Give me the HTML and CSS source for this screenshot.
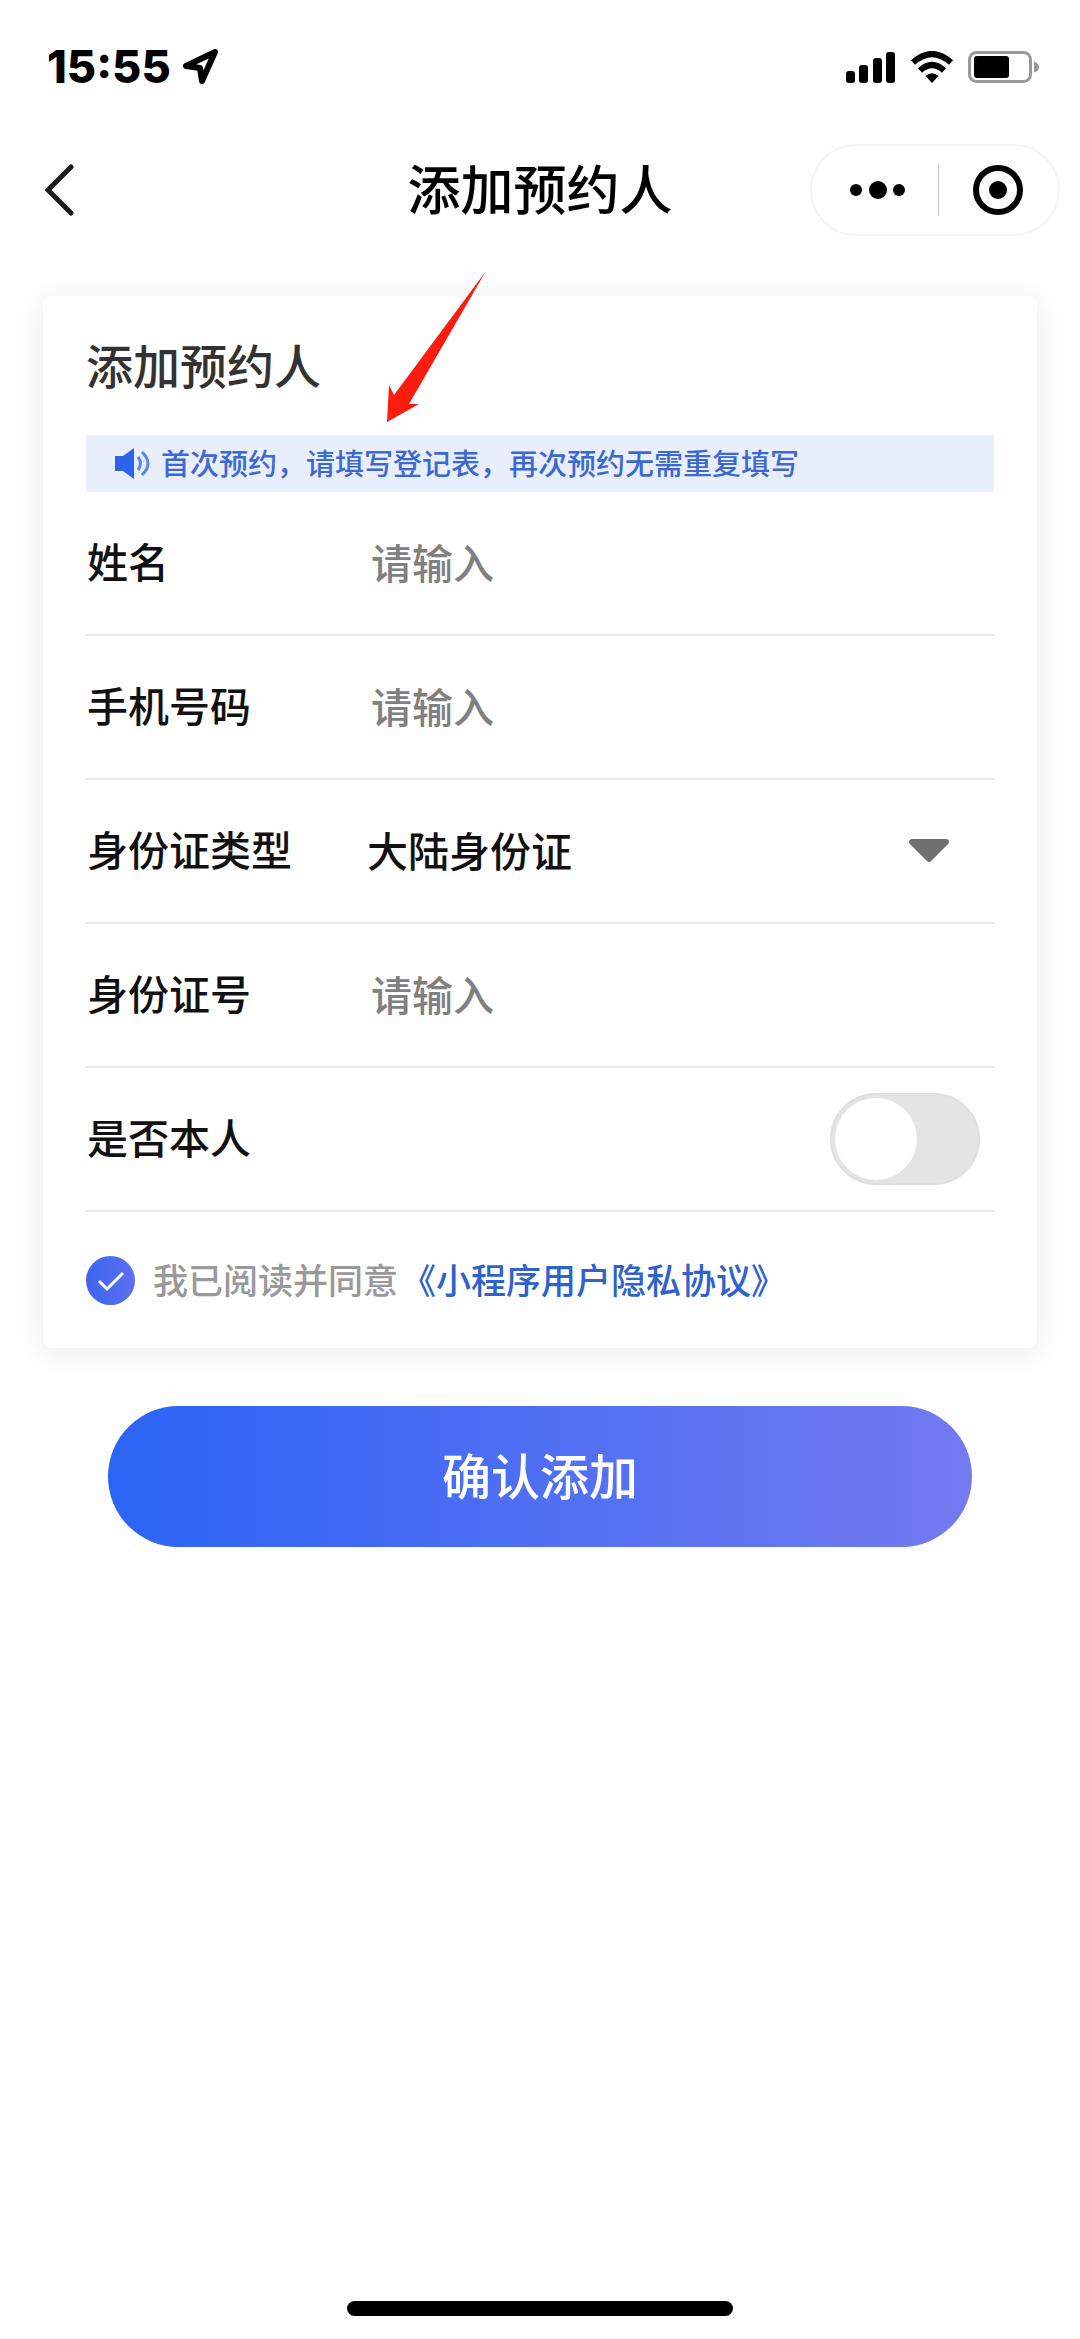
FILE: index.html
```html
<!DOCTYPE html>
<html lang="zh-CN">
<head>
  <meta charset="UTF-8">
  <meta name="viewport" content="width=device-width, initial-scale=1">
  <title>添加预约人</title>
  <link rel="stylesheet" href="styles.css">
</head>
<body>
  <div class="status-bar">
    <div class="status-left">
      <span class="time">15:55</span>
      <svg class="location" width="36" height="36" viewBox="0 0 36 36">
        <path d="M32 3 L3 17 L17 19 L19 32 Z" fill="none" stroke="#000" stroke-width="6" stroke-linejoin="round"/>
      </svg>
    </div>
    <div class="status-right">
      <svg width="50" height="32" viewBox="0 0 50 32">
        <rect x="0" y="20" width="9" height="12" rx="3"/>
        <rect x="13" y="14" width="9" height="18" rx="3"/>
        <rect x="27" y="7" width="9" height="25" rx="3"/>
        <rect x="40" y="1" width="9" height="31" rx="3"/>
      </svg>
      <svg width="44" height="32" viewBox="0 0 44 32">
        <path d="M3 11.5 Q22 -5.5 41 11.5" fill="none" stroke="#000" stroke-width="6"/>
        <path d="M10 19.5 Q22 8.5 34 19.5" fill="none" stroke="#000" stroke-width="6"/>
        <path d="M15.5 25 Q22 19.5 28.5 25 L22 32 Z"/>
      </svg>
      <svg width="72" height="32" viewBox="0 0 72 32">
        <rect x="1.5" y="1.5" width="61" height="29" rx="7" fill="none" stroke="#999" stroke-width="3"/>
        <rect x="6" y="5" width="35" height="22" rx="3"/>
        <path d="M66 10.500 Q71 12 71 16 T66 21.500 Z" fill="#999"/>
      </svg>
    </div>
  </div>

  <header class="nav-bar">
    <button type="button" class="back" aria-label="返回">
      <svg width="30" height="52" viewBox="0 0 30 52">
        <path d="M26 3 L3 26 L26 49" fill="none" stroke="#1a1a1a" stroke-width="5" stroke-linecap="round"/>
      </svg>
    </button>
    <h1>添加预约人</h1>
    <div class="capsule">
      <button type="button" class="more" aria-label="更多">
        <svg width="56" height="52" viewBox="0 0 56 52">
          <circle cx="6" cy="26" r="6"/>
          <circle cx="28" cy="26" r="9"/>
          <circle cx="49" cy="26" r="6"/>
        </svg>
      </button>
      <button type="button" aria-label="关闭">
        <svg width="52" height="52" viewBox="0 0 52 52">
          <circle cx="26" cy="26" r="22" fill="none" stroke="#000" stroke-width="6"/>
          <circle cx="26" cy="26" r="9"/>
        </svg>
      </button>
    </div>
  </header>

  <form class="booking-form">
    <div class="card">
      <h2>添加预约人</h2>
      <div class="notice">
        <svg width="36" height="32" viewBox="0 0 36 32">
          <path d="M0 8 H8 L19 0 V31 L8 23 H0 Z" fill="#2d62ea"/>
          <path d="M23 9 Q28 15.500 23 22" fill="none" stroke="#5b83ea" stroke-width="3"/>
          <path d="M27 4 Q39 15.500 27 27" fill="none" stroke="#5b83ea" stroke-width="3"/>
        </svg>
        <p>首次预约，请填写登记表，再次预约无需重复填写</p>
      </div>

      <div class="row">
        <label for="name">姓名</label>
        <input type="text" id="name" name="name" placeholder="请输入">
      </div>
      <div class="row">
        <label for="phone">手机号码</label>
        <input type="text" id="phone" name="phone" placeholder="请输入">
      </div>
      <div class="row">
        <label for="idType">身份证类型</label>
        <div class="select-box">
          <select id="idType" name="idType">
            <option>大陆身份证</option>
          </select>
          <svg class="caret" width="42" height="26" viewBox="0 0 42 26">
            <path d="M4 4 H38 L21 21 Z" fill="#707070" stroke="#707070" stroke-width="6" stroke-linejoin="round"/>
          </svg>
        </div>
      </div>
      <div class="row">
        <label for="idNo">身份证号</label>
        <input type="text" id="idNo" name="idNo" placeholder="请输入">
      </div>
      <div class="row">
        <label for="isSelf">是否本人</label>
        <input type="checkbox" class="switch" id="isSelf" name="isSelf">
      </div>

      <div class="agreement">
        <span class="check-box">
          <input type="checkbox" id="agree" name="agree" checked>
          <svg class="tick" width="49" height="49" viewBox="0 0 49 49">
            <path d="M13 25 L21 33 L37 17" fill="none" stroke="#fff" stroke-width="3"/>
          </svg>
        </span>
        <label for="agree">我已阅读并同意</label>
        <a href="#">《小程序用户隐私协议》</a>
      </div>

      <svg class="pointer" width="100" height="152" viewBox="0 0 100 152">
        <path d="M99 0 L7 124 L2 114 L0 151 L32 133 L22 133 Z" fill="#fb1c10"/>
      </svg>
    </div>

    <button type="submit" class="submit">确认添加</button>
  </form>

  <div class="home-bar"></div>
</body>
</html>
```

FILE: styles.css
```css
* {
  box-sizing: border-box;
}

body {
  display: flex;
  flex-direction: column;
  min-height: 100vh;
  margin: 0;
  background-color: #fefefe;
  color: #111;
  font-family: "Noto Sans CJK SC", sans-serif;
  font-size: 41px;
  font-weight: 500;
}

h1, h2, p {
  margin: 0;
}

button, input, select {
  margin: 0;
  padding: 0;
  border: none;
  background: none;
  color: inherit;
  font: inherit;
}

svg {
  display: block;
  flex: none;
}

/* status bar */
.status-bar {
  display: flex;
  justify-content: space-between;
  align-items: center;
  height: 133px;
  padding: 0 40px 0 47px;
}

.status-left {
  display: flex;
  align-items: center;
  gap: 12px;
}

.status-right {
  display: flex;
  gap: 14px;
}

.time {
  color: #000;
  font-family: Inter, sans-serif;
  font-size: 45px;
  font-weight: 800;
}

/* nav bar */
.nav-bar {
  display: grid;
  grid-template-columns: 1fr auto 1fr;
  align-items: center;
  height: 114px;
  padding: 0 20px;
}

.nav-bar h1 {
  padding-bottom: 6px;
  color: #000;
  font-size: 53px;
  font-weight: 500;
}

.back {
  justify-self: start;
  padding-left: 25px;
}

.capsule {
  display: flex;
  justify-self: end;
  align-items: center;
  width: 250px;
  height: 92px;
  border: 2px solid #f5f5f5;
  border-radius: 46px;
}

.capsule button {
  display: flex;
  flex: 1;
  justify-content: center;
}

.capsule .more {
  padding-left: 6px;
}

.capsule button + button {
  border-left: 1px solid #ccc;
}

/* form */
.booking-form {
  padding: 49px 43px 0;
}

.card {
  position: relative;
  padding: 0 43px;
  border-radius: 8px;
  background-color: #fefefe;
  box-shadow: 0 4px 28px rgba(0, 0, 0, 0.08);
}

.card h2 {
  padding-bottom: 4px;
  color: #333;
  font-size: 47px;
  font-weight: 500;
  line-height: 135px;
}

.notice {
  display: flex;
  align-items: center;
  gap: 10px;
  height: 57px;
  padding-left: 29px;
  background-color: #e9eefd;
  color: #3c69cf;
  font-size: 29px;
}

.notice p {
  padding-bottom: 4px;
}

.row {
  display: flex;
  align-items: center;
  justify-content: space-between;
  height: 144px;
  border-bottom: 2px solid #e9e9e9;
}

.row label {
  flex: none;
  width: 281px;
  padding: 0 0 6px 1px;
}

.row input[type="text"] {
  flex: 1;
  min-width: 0;
  padding: 0 0 4px 4px;
}

.row input::placeholder {
  color: #808080;
}

.select-box {
  position: relative;
  flex: 1;
}

.select-box select {
  display: block;
  width: 100%;
  padding-bottom: 4px;
  appearance: none;
}

.caret {
  position: absolute;
  top: 50%;
  right: 44px;
  transform: translateY(-50%);
  pointer-events: none;
}

.switch {
  display: flex;
  align-items: center;
  width: 150px;
  height: 92px;
  margin-right: 14px;
  padding: 0 3px;
  border: 2px solid #dfdfdf;
  border-radius: 46px;
  background-color: #e4e4e4;
  appearance: none;
}

.switch::before {
  content: "";
  width: 82px;
  height: 82px;
  border-radius: 50%;
  background-color: #fff;
}

.switch:checked {
  justify-content: flex-end;
  background-color: #2d65f5;
}

.agreement {
  display: flex;
  align-items: center;
  height: 136px;
  color: #999;
  font-size: 35px;
}

.agreement label,
.agreement a {
  padding-bottom: 4px;
}

.agreement a {
  margin-left: 3px;
  color: #2f62cc;
  text-decoration: none;
}

.check-box {
  position: relative;
  margin-right: 18px;
}

.check-box input {
  display: block;
  width: 49px;
  height: 49px;
  border-radius: 50%;
  background: linear-gradient(90deg, #3d66ee, #5c6ff0);
  appearance: none;
}

.tick {
  position: absolute;
  top: 0;
  left: 0;
  pointer-events: none;
}

/* red arrow over the card, pointing at the notice */
.pointer {
  position: absolute;
  top: -25px;
  left: 344px;
  pointer-events: none;
}

.submit {
  display: block;
  width: calc(100% - 130px);
  height: 141px;
  margin: 58px auto 0;
  padding-bottom: 6px;
  border-radius: 71px;
  background: linear-gradient(90deg, #2b64f5, #747af0);
  color: #fff;
  font-size: 49px;
}

.home-bar {
  width: 386px;
  height: 15px;
  margin: auto auto 23px;
  border-radius: 8px;
  background-color: #000;
}
```
